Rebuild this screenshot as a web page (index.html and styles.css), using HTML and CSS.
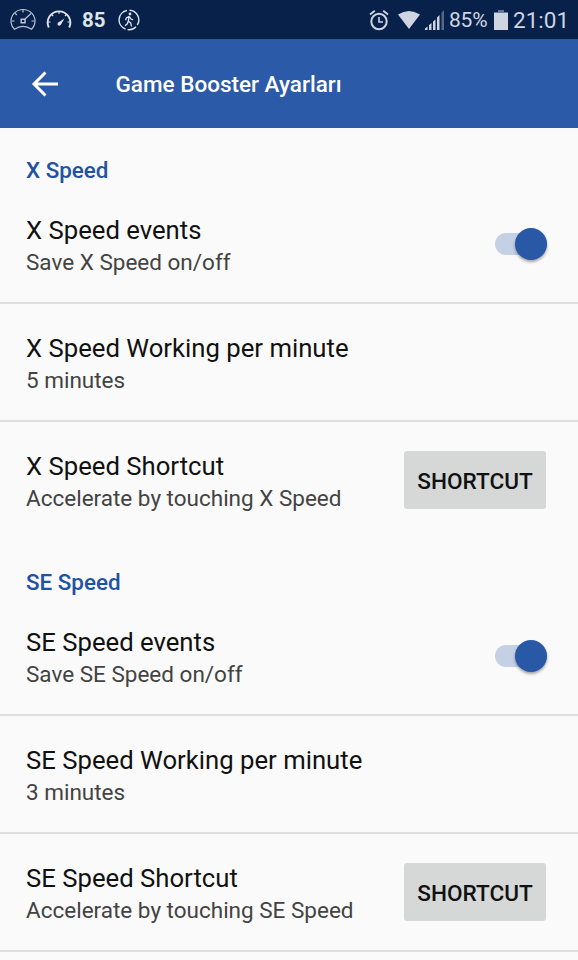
FILE: index.html
```html
<!DOCTYPE html>
<html lang="tr">
<head>
    <meta charset="UTF-8">
    <meta name="viewport" content="width=device-width, initial-scale=1.0">
    <title>Game Booster Ayarları</title>
    <link rel="stylesheet" href="styles.css">
</head>
<body>
    <div class="status-bar">
        <div class="status-left">
            <svg class="gauge-icon" width="26" height="24" viewBox="0 0 26 24" fill="none" stroke="#b9c3d3" stroke-width="1.2">
                <path d="M4.500 21.300A12 11.600 0 1 1 21.500 21.300Q13 15.500 4.500 21.300Z"/>
                <path d="M1.500 13h3M21.500 13h3M13 1.500v3M5 5.200l1.800 1.800M21 5.500l-6 5.500"/>
                <path d="M11.200 11.200h3.800v3.600h-3.800z" stroke-width="1.500"/>
            </svg>
            <svg class="speed-icon" width="26" height="22" viewBox="0 0 26 22" fill="none" stroke="#dfe3ea">
                <path d="M2.800 18.500A11.300 11.300 0 1 1 23.200 18.500" stroke-width="1.900"/>
                <path d="M2 13h2.500M24 13h-2.500M13 2.500v2.300M5.500 5.500l1.700 1.700M20.500 5.500l-1.500 1.500" stroke-width="1.200"/>
                <path d="M18.500 9.500L14.700 16q-1.700 1.300-3 0q-.8-1.500.6-2.500z" fill="#dfe3ea" stroke="none"/>
            </svg>
            <span class="status-num">85</span>
            <svg class="walk-icon" width="22" height="22" viewBox="0 0 22 22" fill="none" stroke="#dfe3ea">
                <path d="M9 1.500A9.600 9.600 0 0 0 7.500 20M11.500 1.300A9.600 9.600 0 0 1 19.300 16M18 17.700A9.600 9.600 0 0 1 9.500 20.600" stroke-width="1.400"/>
                <circle cx="12" cy="5" r="1.400" fill="#dfe3ea" stroke="none"/>
                <path d="M11.300 7.200L10.300 12l2.500 2.200.6 3.300M10.300 12l-1 2.800-2.300 2M10.800 7.600L8.300 9l-.7 2.300M11.700 8l1.300 2 2 .800" stroke-width="1.300"/>
            </svg>
        </div>
        <div class="status-right">
            <svg class="alarm-icon" width="20" height="22" viewBox="0 0 20 22" fill="none" stroke="#cfd5e0">
                <circle cx="10" cy="12.500" r="7.700" stroke-width="2"/>
                <path d="M10 8v5h4" stroke-width="1.600"/>
                <path d="M1 5.500L5.800 1.800M19 5.500L14.200 1.800" stroke-width="1.900"/>
            </svg>
            <svg class="wifi-icon" width="22" height="18" viewBox="0 0 22 18" fill="#cfd5e0">
                <path d="M0 3.500Q11-3.500 22 3.500L11 18z"/>
            </svg>
            <svg class="signal-icon" width="20" height="20" viewBox="0 0 20 20" fill="#cfd5e0">
                <path d="M0 18.500l2.500-2V20H0zM4 15l2.500-2v7H4zM8 11.500l2.500-2V20H8zM12 7.500l2.500-2.500V20h-2.500z"/>
                <path d="M16.500 3l2.500-3v20h-2.500z" fill="#52688a"/>
            </svg>
            <span class="battery-text">85%</span>
            <svg class="battery-icon" width="14" height="20" viewBox="0 0 14 20" fill="#cfd5e0">
                <path d="M4 0h6v2h4v2H0V2h4z" fill="#65789a"/>
                <path d="M0 3h14v17H0z"/>
            </svg>
            <span class="clock">21:01</span>
        </div>
    </div>

    <div class="toolbar">
        <svg width="28" height="28" viewBox="0 0 28 28" fill="none" stroke="#fff" stroke-width="3">
            <path d="M14.500 2.500L3 14l11.500 11.500M3 14h24"/>
        </svg>
        <h1>Game Booster Ayarları</h1>
    </div>

    <div class="section">
        <h2>X Speed</h2>
        <div class="row">
            <div class="texts">
                <div class="title">X Speed events</div>
                <div class="summary">Save X Speed on/off</div>
            </div>
            <div class="switch"><div class="thumb"></div></div>
        </div>
        <div class="row">
            <div class="texts">
                <div class="title">X Speed Working per minute</div>
                <div class="summary">5 minutes</div>
            </div>
        </div>
        <div class="row no-line">
            <div class="texts">
                <div class="title">X Speed Shortcut</div>
                <div class="summary">Accelerate by touching X Speed</div>
            </div>
            <button class="shortcut">SHORTCUT</button>
        </div>
    </div>

    <div class="section">
        <h2>SE Speed</h2>
        <div class="row">
            <div class="texts">
                <div class="title">SE Speed events</div>
                <div class="summary">Save SE Speed on/off</div>
            </div>
            <div class="switch"><div class="thumb"></div></div>
        </div>
        <div class="row">
            <div class="texts">
                <div class="title">SE Speed Working per minute</div>
                <div class="summary">3 minutes</div>
            </div>
        </div>
        <div class="row">
            <div class="texts">
                <div class="title">SE Speed Shortcut</div>
                <div class="summary">Accelerate by touching SE Speed</div>
            </div>
            <button class="shortcut">SHORTCUT</button>
        </div>
    </div>
</body>
</html>
```
FILE: styles.css
```css
body {
    margin: 0;
    height: 960px;
    overflow: hidden;
    background-color: #fafafa;
    font-family: Roboto, sans-serif;
}
svg {
    display: block;
    flex-shrink: 0;
}
.status-bar {
    display: flex;
    justify-content: space-between;
    height: 39px;
    box-sizing: border-box;
    padding: 0 10px 0 10px;
    background-color: #08214a;
    color: #cfd5e0;
}
.status-left, .status-right {
    display: flex;
    align-items: center;
}
.speed-icon {
    margin-left: 10px;
}
.status-num {
    margin-left: 10px;
    width: 24px;
    font-size: 20.5px;
    font-weight: bold;
    color: #dfe3ea;
}
.walk-icon {
    margin-left: 12px;
}
.wifi-icon {
    margin-left: 9px;
}
.signal-icon {
    margin-left: 5px;
}
.battery-text {
    width: 39px;
    margin-left: 4px;
    font-size: 21px;
    letter-spacing: -0.2px;
}
.battery-icon {
    margin-left: 6px;
}
.clock {
    width: 55px;
    margin-left: 5px;
    font-size: 22.5px;
}
.toolbar {
    display: flex;
    align-items: center;
    height: 89px;
    padding-left: 31px;
    background-color: #2b5aa8;
    color: white;
}
h1 {
    margin: 1px 0 0 56.5px;
    font-size: 22.5px;
    font-weight: 500;
}
h2 {
    margin: 0;
    height: 58px;
    box-sizing: border-box;
    padding: 28px 26px 0;
    font-size: 22.4px;
    font-weight: 500;
    line-height: 28px;
    color: #1f51a5;
}
.row {
    display: flex;
    justify-content: space-between;
    height: 118px;
    box-sizing: border-box;
    padding: 28px 32px 0 26px;
    border-bottom: 2px solid #dedede;
}
.no-line {
    border-bottom-color: transparent;
}
.title {
    font-size: 25.7px;
    line-height: 32px;
    color: #111;
    white-space: nowrap;
}
.summary {
    font-size: 22.5px;
    line-height: 32px;
    color: #434343;
    white-space: nowrap;
}
.switch {
    display: flex;
    justify-content: flex-end;
    align-items: center;
    width: 52px;
    height: 22px;
    margin: 19px -1px 0 0;
    border-radius: 11px;
    background-color: #c4d1e5;
}
.thumb {
    width: 32px;
    height: 32px;
    flex-shrink: 0;
    border-radius: 50%;
    background-color: #2858a6;
    box-shadow: 0 2px 3px rgba(0, 0, 0, 0.35);
}
.shortcut {
    width: 142px;
    height: 58px;
    margin-top: 1px;
    padding: 2px 0 0;
    border: none;
    border-radius: 3px;
    background-color: #d6d8d7;
    color: #111;
    font-family: Roboto, sans-serif;
    font-size: 22.6px;
    font-weight: 500;
}
```
